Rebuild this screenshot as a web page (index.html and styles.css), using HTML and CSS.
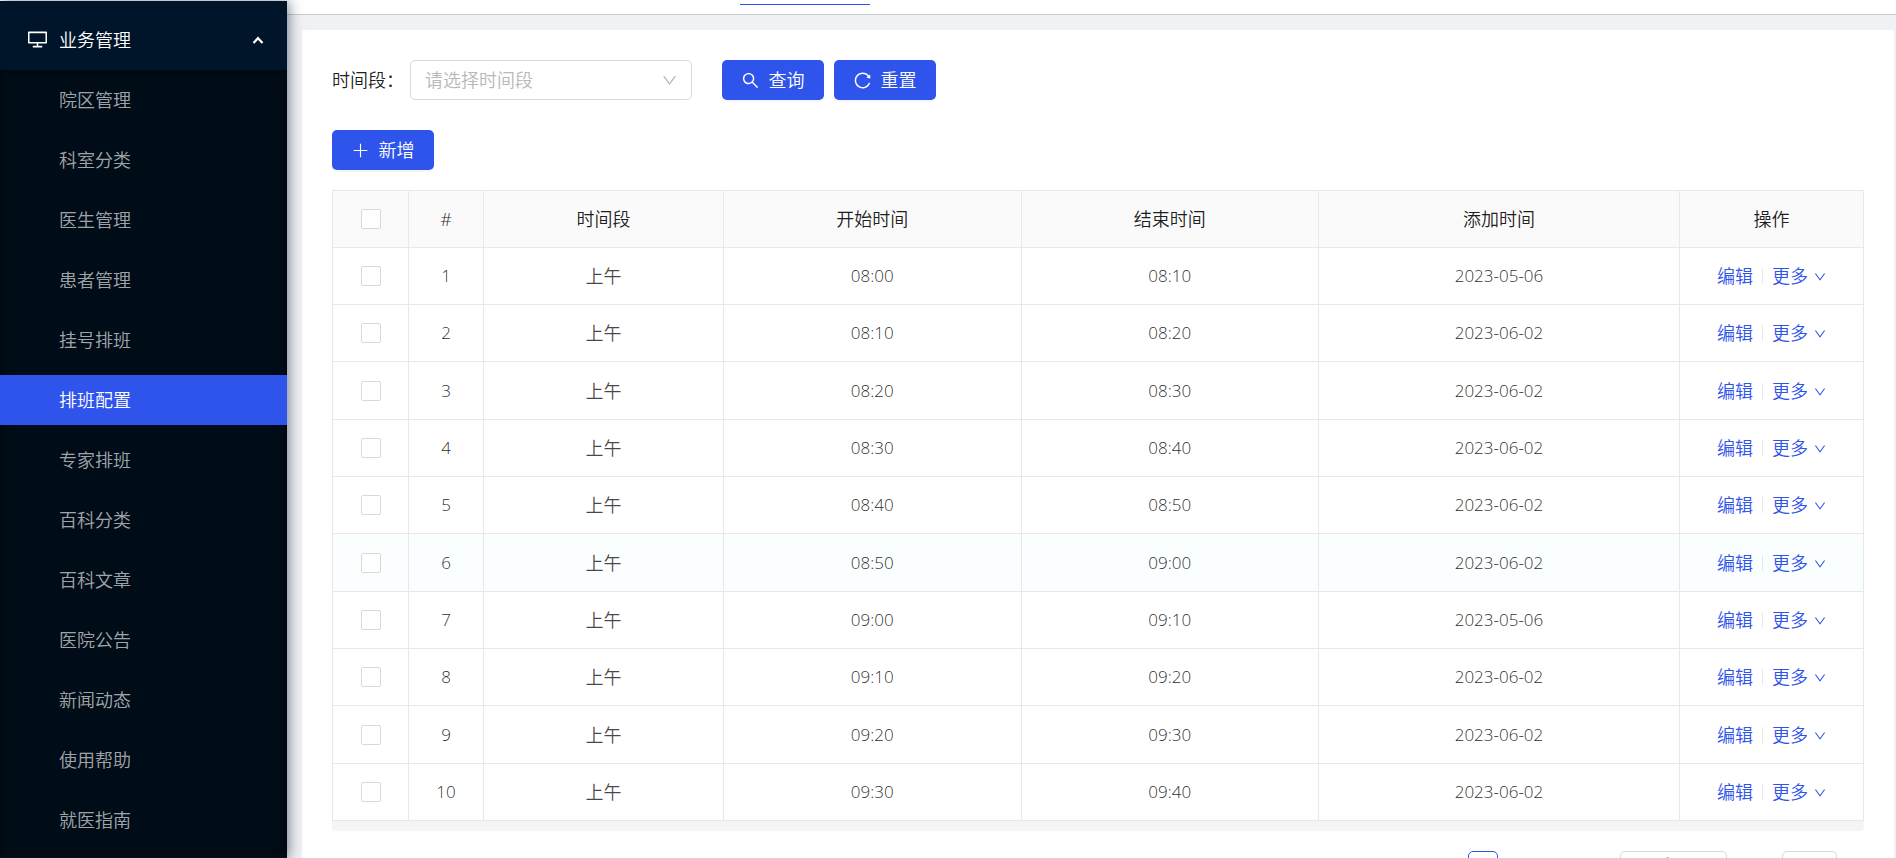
FILE: index.html
```html
<!DOCTYPE html>
<html lang="zh-CN">
<head>
<meta charset="utf-8">
<title>排班配置</title>
<link rel="stylesheet" href="styles.css">
</head>
<body>
<svg class="sprite" aria-hidden="true">
  <symbol id="down" viewBox="64 64 896 896"><path d="M884 256h-75c-5.1 0-9.900 2.500-12.900 6.600L512 654.200 227.900 262.600c-3-4.100-7.800-6.600-12.900-6.600h-75c-6.500 0-10.300 7.400-6.500 12.700l352.600 486.100c12.800 17.600 39 17.600 51.700 0l352.600-486.100c3.900-5.300.1-12.700-6.400-12.700z"/></symbol>
  <symbol id="search" viewBox="64 64 896 896"><path d="M909.600 854.500L649.900 594.800C690.200 542.700 712 479 712 412c0-80.200-31.300-155.400-87.900-212.100-56.600-56.700-132-87.900-212.100-87.900s-155.500 31.300-212.100 87.900C143.200 256.500 112 331.800 112 412c0 80.100 31.300 155.500 87.900 212.100C256.500 680.800 331.800 712 412 712c67 0 130.600-21.800 182.700-62l259.700 259.600a8.200 8.200 0 0 0 11.600 0l43.600-43.500a8.200 8.200 0 0 0 0-11.600zM570.400 570.400C528 612.700 471.800 636 412 636s-116-23.300-158.400-65.600C211.300 528 188 471.800 188 412s23.300-116.100 65.600-158.400C296 211.300 352.200 188 412 188s116.100 23.200 158.400 65.600S636 352.200 636 412s-23.300 116.100-65.600 158.400z"/></symbol>
  <symbol id="reload" viewBox="64 64 896 896"><path d="M909.100 209.300l-56.400 44.100C775.800 155.100 656.200 92 521.900 92 290 92 102.300 279.500 102 511.500 101.700 743.700 289.800 932 521.900 932c181.300 0 335.800-115 394.600-276.100 1.500-4.200-.7-8.900-4.900-10.300l-56.700-19.500a8 8 0 0 0-10.100 4.800c-1.800 5-3.800 10-5.900 14.900-17.300 41-42.100 77.800-73.700 109.400A344.770 344.770 0 0 1 655.900 829c-42.300 17.900-87.400 27-133.800 27-46.500 0-91.500-9.100-133.800-27A341.500 341.500 0 0 1 279 755.200a342.160 342.160 0 0 1-73.700-109.400c-17.900-42.400-27-87.400-27-133.900s9.100-91.500 27-133.900c17.300-41 42.100-77.800 73.700-109.400 31.600-31.600 68.400-56.400 109.300-73.800 42.300-17.900 87.400-27 133.800-27 46.500 0 91.500 9.100 133.800 27a341.500 341.500 0 0 1 109.300 73.800c9.900 9.900 19.200 20.400 27.800 31.400l-60.200 47a8 8 0 0 0 3 14.100l175.600 43c5 1.200 9.900-2.600 9.900-7.700l.8-180.900c-.1-6.600-7.800-10.300-13-6.200z"/></symbol>
  <symbol id="plus" viewBox="64 64 896 896"><path d="M482 152h60v720h-60zM152 482h720v60H152z"/></symbol>
  <symbol id="desktop" viewBox="64 64 896 896"><path d="M928 140H96c-17.700 0-32 14.300-32 32v496c0 17.700 14.300 32 32 32h380v112H304c-8.800 0-16 7.200-16 16v48c0 4.400 3.600 8 8 8h432c4.400 0 8-3.600 8-8v-48c0-8.800-7.200-16-16-16H548V700h380c17.700 0 32-14.300 32-32V172c0-17.700-14.300-32-32-32zm-40 488H136V212h752v416z"/></symbol>
</svg>
<div class="layout">
  <nav class="sider">
    <button class="menu-title" type="button" aria-expanded="true">
      <svg class="icon-desktop"><use href="#desktop"/></svg>
      <span>业务管理</span>
      <svg class="arrow" viewBox="0 0 12 8"><path d="M1.500 7 6 2.200 10.500 7" fill="none" stroke="currentColor" stroke-width="2.200"/></svg>
    </button>
    <div class="submenu">
      <a href="#">院区管理</a>
      <a href="#">科室分类</a>
      <a href="#">医生管理</a>
      <a href="#">患者管理</a>
      <a href="#">挂号排班</a>
      <a href="#" class="selected" aria-current="page">排班配置</a>
      <a href="#">专家排班</a>
      <a href="#">百科分类</a>
      <a href="#">百科文章</a>
      <a href="#">医院公告</a>
      <a href="#">新闻动态</a>
      <a href="#">使用帮助</a>
      <a href="#">就医指南</a>
    </div>
  </nav>
  <div class="main">
    <header class="tabs"><div class="tab-line"></div></header>
    <main class="card">
      <form class="search">
        <label for="period">时间段：</label>
        <div class="select period">
          <select id="period"><option>请选择时间段</option></select>
          <svg><use href="#down"/></svg>
        </div>
        <div class="actions">
          <button class="btn" type="button"><svg><use href="#search"/></svg>查询</button>
          <button class="btn" type="button"><svg><use href="#reload"/></svg>重置</button>
        </div>
      </form>
      <div class="toolbar"><button class="btn" type="button"><svg><use href="#plus"/></svg>新增</button></div>
      <div class="table-wrap">
        <table>
          <colgroup><col class="c-check"><col class="c-index"><col class="c-period"><col class="c-time"><col class="c-time"><col class="c-date"><col class="c-ops"></colgroup>
          <thead><tr><th><input type="checkbox" aria-label="全选"></th><th>#</th><th>时间段</th><th>开始时间</th><th>结束时间</th><th>添加时间</th><th>操作</th></tr></thead>
          <tbody id="rows"></tbody>
        </table>
      </div>
      <div class="pagination">
        <button class="page" type="button" aria-label="第一页" aria-current="page"></button>
        <div class="select size"><select aria-label="每页条数"><option>10 条/页</option></select></div>
        <input class="jump" type="text" aria-label="跳至页码">
      </div>
    </main>
  </div>
</div>
<script src="rows.js"></script>
</body>
</html>
```
FILE: styles.css
```css
* { box-sizing: border-box; }
body {
  margin: 0;
  font-family: "Open Sans", "Noto Sans CJK SC", sans-serif;
  font-size: 18px;
  font-weight: 350;
  line-height: 28px;
  color: rgba(0, 0, 0, 0.72);
}
button, input, select { font: inherit; color: inherit; margin: 0; }
button { cursor: pointer; }
svg { fill: currentColor; flex: none; }
.sprite { display: none; }

.layout { display: flex; height: 100vh; overflow: hidden; }
.sider {
  flex: none;
  width: 287px;
  margin-top: 1px;
  background: #001529;
  box-shadow: 2px 0 12px rgba(0, 21, 41, 0.5);
  z-index: 1;
}
.menu-title {
  display: flex;
  align-items: center;
  width: 100%;
  height: 69px;
  padding: 8px 23px 0 28px;
  border: 0;
  background: none;
  color: #fff;
  text-align: left;
}
.menu-title span { flex: 1; margin-left: 12px; }
.menu-title .icon-desktop { width: 19px; height: 19px; }
.menu-title .arrow { width: 12px; height: 8px; }
.submenu {
  display: flex;
  flex-direction: column;
  gap: 10px;
  padding: 5px 0 12px;
  background: #000c17;
  box-shadow: inset 0 2px 8px rgba(0, 0, 0, 0.45);
}
.submenu a {
  height: 50px;
  padding-left: 59px;
  line-height: 51px;
  color: rgba(255, 255, 255, 0.65);
  text-decoration: none;
}
.submenu .selected { background: #2f54eb; color: #fff; }

.main { flex: 1; min-width: 0; background: #f0f1f5; }
.tabs { height: 15px; padding-left: 453px; background: #fff; border-bottom: 1px solid #ccc; }
.tab-line { width: 130px; height: 5px; border-bottom: 1px solid #2f54eb; }
.card { margin: 15px 2px 0 15px; padding: 30px; background: #fff; border-radius: 2px; }

.search { display: flex; align-items: center; }
.search label { width: 78px; color: rgba(0, 0, 0, 0.9); white-space: nowrap; }
.select { position: relative; border: 1px solid #d9d9d9; border-radius: 5px; background: #fff; }
.select select { appearance: none; width: 100%; height: 100%; padding: 0 14px; border: 0; background: none; }
.period { width: 282px; height: 40px; color: #b8b8b8; }
.period svg { position: absolute; top: 12px; right: 14px; width: 15px; height: 15px; pointer-events: none; }
.actions { display: flex; gap: 10px; margin-left: 30px; }
.btn {
  display: flex;
  align-items: center;
  justify-content: center;
  gap: 10px;
  width: 102px;
  height: 40px;
  padding: 0;
  border: 0;
  border-radius: 5px;
  background: #2f54eb;
  color: #fff;
  box-shadow: 0 2px 0 rgba(0, 0, 0, 0.04);
}
.btn svg { width: 17px; height: 17px; }
.toolbar { margin: 30px 0 20px; }

.table-wrap { padding-bottom: 10px; background: #f5f5f5; border-radius: 0 0 4px 4px; }
table { width: 100%; table-layout: fixed; border-collapse: collapse; background: #fff; }
th, td { height: 57px; padding: 0; border: 1px solid #e8e8e8; text-align: center; font-weight: 350; }
tbody tr:nth-child(3n) td { height: 58px; }
th { background: #fafafa; color: rgba(0, 0, 0, 0.9); }
td { font-size: 17px; color: rgba(0, 0, 0, 0.85); }
td.cjk { font-size: 18px; color: rgba(0, 0, 0, 0.72); }
tr.hover td { background: #fafeff; }
.c-check { width: 76px; }
.c-index { width: 75px; }
.c-period { width: 240px; }
.c-date { width: 361px; }
.c-ops { width: 184px; }
input[type="checkbox"] {
  appearance: none;
  display: block;
  width: 20px;
  height: 20px;
  margin: 0 auto;
  border: 1px solid #d9d9d9;
  border-radius: 2px;
  background: #fff;
}
.ops { display: flex; align-items: center; justify-content: center; font-size: 18px; }
.ops a { color: #2f54eb; text-decoration: none; }
.ops i { width: 1px; height: 16px; margin: 0 9px; background: #e8e8e8; }
.ops svg { width: 12px; height: 12px; margin-left: 6px; }

.pagination { display: flex; justify-content: flex-end; height: 30px; margin: 20px 27px 0 0; }
.page { width: 30px; padding: 0; border: 1px solid #2f54eb; border-radius: 5px; background: #fff; color: #2f54eb; }
.size { width: 107px; margin-left: 122px; }
.jump { width: 55px; margin-left: 55px; border: 1px solid #d9d9d9; border-radius: 5px; }
```
FILE: rows.js
```js
const rows = [
  ["08:00", "08:10", "2023-05-06"],
  ["08:10", "08:20", "2023-06-02"],
  ["08:20", "08:30", "2023-06-02"],
  ["08:30", "08:40", "2023-06-02"],
  ["08:40", "08:50", "2023-06-02"],
  ["08:50", "09:00", "2023-06-02"],
  ["09:00", "09:10", "2023-05-06"],
  ["09:10", "09:20", "2023-06-02"],
  ["09:20", "09:30", "2023-06-02"],
  ["09:30", "09:40", "2023-06-02"]
];
document.getElementById("rows").innerHTML = rows.map(([start, end, date], i) => `
  <tr${i === 5 ? ' class="hover"' : ""}>
    <td><input type="checkbox" aria-label="选择第${i + 1}行"></td>
    <td>${i + 1}</td><td class="cjk">上午</td><td>${start}</td><td>${end}</td><td>${date}</td>
    <td><div class="ops"><a href="#">编辑</a><i></i><a href="#">更多<svg><use href="#down"/></svg></a></div></td>
  </tr>`).join("");
```
